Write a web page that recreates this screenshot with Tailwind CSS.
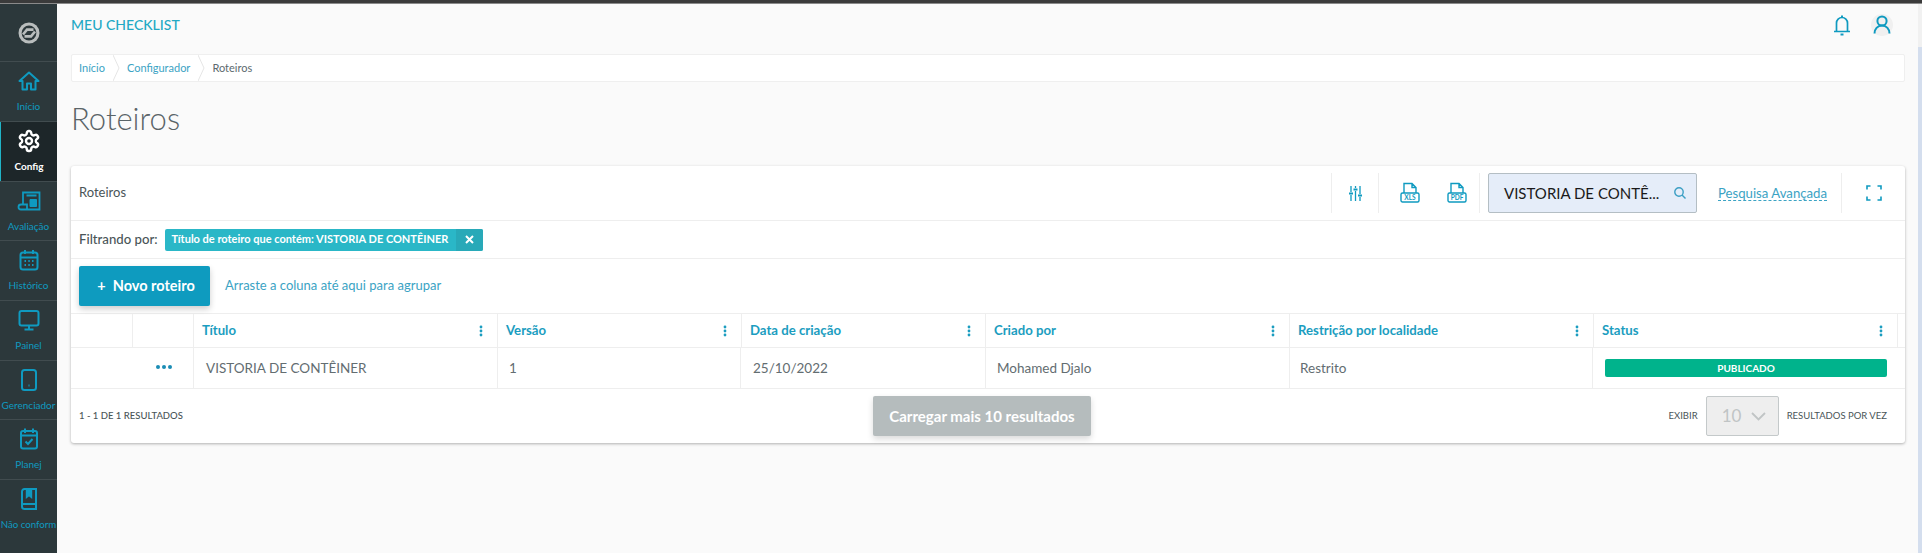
<!DOCTYPE html>
<html lang="pt">
<head>
  <meta charset="UTF-8" />
  <title>Meu Checklist - Roteiros</title>
  <script src="https://cdn.jsdelivr.net/npm/@tailwindcss/browser@4"></script>
</head>
<body class="bg-[#fafafa] font-['Lato','Liberation_Sans',sans-serif] overflow-hidden">
  <div class="h-[553px] flex flex-col">
    <!-- top strip -->
    <div class="h-[4px] shrink-0 bg-[#3b3b3b] border-b border-[#8a8a8a]"></div>

    <div class="flex flex-1 min-h-0">
      <!-- Sidebar -->
      <nav class="w-[57px] shrink-0 bg-[#2c383b] flex flex-col text-[10px] text-[#0f9ac0] text-center">
        <div class="h-[58px] flex items-center justify-center border-b border-[#414c4f]">
          <svg width="22" height="22" viewBox="0 0 22 22" fill="none">
            <circle cx="11" cy="11" r="10.5" fill="#b9bdbd"/>
            <circle cx="11" cy="11" r="7.4" fill="#2c383b"/>
            <path d="M5 12.5 9 7.6H15.5M17 9.5 13 14.4H6.5" stroke="#b9bdbd" stroke-width="2.6"/>
          </svg>
        </div>
        <a class="h-[60px] flex flex-col items-center pt-[7px] border-b border-[#414c4f]">
          <svg width="24" height="24" viewBox="0 0 24 24" fill="none" stroke="#0f9ac0" stroke-width="2"><path d="M2.5 12 12 3.5 21.5 12H18.5V20.5H14V14.5H10V20.5H5.5V12Z" stroke-linejoin="round"/></svg>
          <span class="mt-[6px]">Início</span>
        </a>
        <a class="h-[59px] flex flex-col items-center pt-[7px] bg-[#1d2629] border-l border-[#20b3c6] text-white font-bold">
          <svg width="24" height="24" viewBox="0 0 24 24" fill="none" stroke="#fff" stroke-width="2.4"><path d="M12.22 2h-.44a2 2 0 0 0-2 2v.18a2 2 0 0 1-1 1.73l-.43.25a2 2 0 0 1-2 0l-.15-.08a2 2 0 0 0-2.73.73l-.22.38a2 2 0 0 0 .73 2.73l.15.1a2 2 0 0 1 1 1.72v.51a2 2 0 0 1-1 1.74l-.15.09a2 2 0 0 0-.73 2.73l.22.38a2 2 0 0 0 2.73.73l.15-.08a2 2 0 0 1 2 0l.43.25a2 2 0 0 1 1 1.73V20a2 2 0 0 0 2 2h.44a2 2 0 0 0 2-2v-.18a2 2 0 0 1 1-1.73l.43-.25a2 2 0 0 1 2 0l.15.08a2 2 0 0 0 2.73-.73l.22-.39a2 2 0 0 0-.73-2.73l-.15-.08a2 2 0 0 1-1-1.74v-.5a2 2 0 0 1 1-1.74l.15-.09a2 2 0 0 0 .73-2.73l-.22-.38a2 2 0 0 0-2.73-.73l-.15.08a2 2 0 0 1-2 0l-.43-.25a2 2 0 0 1-1-1.73V4a2 2 0 0 0-2-2z"/><circle cx="12" cy="12" r="3"/></svg>
          <span class="mt-[6px]">Config</span>
        </a>
        <a class="h-[60px] flex flex-col items-center pt-[7px] border-b border-t border-[#414c4f]">
          <svg width="24" height="24" viewBox="0 0 24 24" fill="none" stroke="#0f9ac0" stroke-width="1.8"><path d="M6 15V3.5H22.5V20.5H4"/><path d="M4 20.5A2.5 2.5 0 0 1 4 15.5H10V20.5"/><path d="M9.5 6.5H19.5" stroke-width="2"/><path d="M13 10.5H19.5V17.5H13ZM16.2 10.5V17.5M13 14H19.5" fill="#0f9ac0" stroke-width="1"/></svg>
          <span class="mt-[6px]">Avaliação</span>
        </a>
        <a class="h-[60px] flex flex-col items-center pt-[7px] border-b border-[#414c4f]">
          <svg width="24" height="24" viewBox="0 0 24 24" fill="none" stroke="#0f9ac0" stroke-width="2"><rect x="3.5" y="4.5" width="17" height="17" rx="2.5"/><path d="M8 2V6M16 2V6M3.5 9.5H20.5"/><path d="M7.5 13H9M11.3 13H12.8M15 13H16.5M7.5 17H9M11.3 17H12.8M15 17H16.5" stroke-width="1.8"/></svg>
          <span class="mt-[6px]">Histórico</span>
        </a>
        <a class="h-[60px] flex flex-col items-center pt-[7px] border-b border-[#414c4f]">
          <svg width="24" height="24" viewBox="0 0 24 24" fill="none" stroke="#0f9ac0" stroke-width="2"><rect x="2.5" y="3" width="19" height="14.5" rx="2"/><path d="M12 17.5V21M7.5 21.5H16.5"/></svg>
          <span class="mt-[6px]">Painel</span>
        </a>
        <a class="h-[59px] flex flex-col items-center pt-[7px] border-b border-[#414c4f]">
          <svg width="24" height="24" viewBox="0 0 24 24" fill="none" stroke="#0f9ac0" stroke-width="2"><rect x="5" y="2" width="14" height="20" rx="2.5"/><path d="M11.5 17.5H12.5"/></svg>
          <span class="mt-[6px]">Gerenciador</span>
        </a>
        <a class="h-[60px] flex flex-col items-center pt-[7px] border-b border-[#414c4f]">
          <svg width="24" height="24" viewBox="0 0 24 24" fill="none" stroke="#0f9ac0" stroke-width="2"><rect x="4" y="4" width="16" height="17.5" rx="2"/><path d="M8 1.5V6M16 1.5V6M4 8.5H20"/><path d="M8.5 14.5 11 17 15.5 12"/></svg>
          <span class="mt-[6px]">Planej</span>
        </a>
        <a class="flex flex-col items-center pt-[7px]">
          <svg width="24" height="24" viewBox="0 0 24 24" fill="none" stroke="#0f9ac0" stroke-width="2"><path d="M5 18V4.5A2.5 2.5 0 0 1 7.5 2H19V22H7.5A2.5 2.5 0 0 1 5 19.5V18A1.5 1.5 0 0 1 6.5 17H19"/><path d="M9.5 2.5V10.5L12 8.5 14.5 10.5V2.5" fill="#0f9ac0" stroke-width="1.4"/></svg>
          <span class="mt-[6px] whitespace-nowrap text-[9.7px]">Não conform</span>
        </a>
      </nav>

      <!-- Main -->
      <main class="flex-1 min-w-0 pl-[14px] pr-[13px] flex flex-col">
        <header class="h-[50px] shrink-0 flex items-center justify-between">
          <span class="text-[14px] text-[#24a9c4] font-medium -mt-[9px]">MEU CHECKLIST</span>
          <div class="flex items-center gap-[18px] -mt-[8px] pr-[12px]">
            <svg width="22" height="24" viewBox="0 0 22 24" fill="none" stroke="#0f9ac0" stroke-width="1.7"><path d="M5.5 18.5V10A5.5 5.5 0 0 1 16.5 10V18.5M3 18.5H19"/><path d="M11 2.5V4.5" stroke-width="2"/><path d="M9.5 21.5H12.5" stroke-width="2"/></svg>
            <div class="w-[22px] h-[22px] rounded-full bg-[#f0f0f0] flex items-center justify-center">
              <svg width="22" height="22" viewBox="0 0 22 22" fill="none" stroke="#0f9ac0" stroke-width="2"><circle cx="11" cy="7" r="4.6"/><path d="M3.5 19.5C3.5 15 6.5 11.6 11 11.6S18.5 15 18.5 19.5"/></svg>
            </div>
          </div>
        </header>

        <!-- Breadcrumb -->
        <div class="h-[28px] shrink-0 bg-white border border-[#efefef] rounded-[2px] flex items-center text-[11px] text-[#3ba3c4]">
          <span class="pl-[7px] pr-[8px]">Início</span>
          <svg width="7" height="26" viewBox="0 0 7 26" fill="none" stroke="#e6e6e6"><path d="M0 0 6 13 0 26"/></svg>
          <span class="pl-[7px] pr-[8px]">Configurador</span>
          <svg width="7" height="26" viewBox="0 0 7 26" fill="none" stroke="#e6e6e6"><path d="M0 0 6 13 0 26"/></svg>
          <span class="pl-[7px] text-[#5c6a6e]">Roteiros</span>
        </div>

        <h1 class="h-[84px] shrink-0 flex items-center pb-[12px] text-[31px] font-light text-[#5a6468]">Roteiros</h1>

        <!-- Card -->
        <section class="w-[1834px] h-[277px] shrink-0 bg-white rounded-[3px] shadow-[0_1px_3px_rgba(0,0,0,0.3)] flex flex-col">
          <div class="h-[55px] shrink-0 flex items-center border-b border-[#eeeeee]">
            <span class="pl-[8px] text-[13px] text-[#4a5558] flex-1">Roteiros</span>
            <div class="w-[48px] h-[40px] flex items-center justify-center border-x border-[#eeeeee]">
              <svg width="13" height="15" viewBox="0 0 13 15" fill="none" stroke="#0f9ac0" stroke-width="1.3"><path d="M2 0V6M2 9V15M6.5 0V2M6.5 5V15M11 0V8M11 11V15"/><path d="M0 7.5H4M4.5 3.5H8.5M9 9.5H13" stroke-width="2.2"/></svg>
            </div>
            <div class="w-[101px] h-[40px] flex items-center gap-[27px] pl-[21px] border-r border-[#eeeeee]">
              <svg width="20" height="22" viewBox="0 0 20 22" fill="none" stroke="#0f9ac0" stroke-width="1.4"><path d="M4 11V1.5H12L16 5.5V11M12 1.5V5.5H16"/><rect x="1" y="11" width="18" height="9" rx="1.5"/><text x="10" y="18" text-anchor="middle" font-size="6.5" font-weight="700" fill="#0f9ac0" stroke="none">XLS</text></svg>
              <svg width="20" height="22" viewBox="0 0 20 22" fill="none" stroke="#0f9ac0" stroke-width="1.4"><path d="M4 11V1.5H12L16 5.5V11M12 1.5V5.5H16"/><rect x="1" y="11" width="18" height="9" rx="1.5"/><text x="10" y="18" text-anchor="middle" font-size="6.5" font-weight="700" fill="#0f9ac0" stroke="none">PDF</text></svg>
            </div>
            <div class="ml-[8px] w-[209px] h-[40px] bg-[#e5edf9] border border-[#b4bec4] rounded-[2px] flex items-center justify-between pl-[15px] pr-[9px]">
              <span class="text-[15px] text-[#1a1a1a]">VISTORIA DE CONTÊ...</span>
              <svg width="14" height="14" viewBox="0 0 14 14" fill="none" stroke="#3c9fc4" stroke-width="1.4"><circle cx="6" cy="6" r="4.2"/><path d="M9 9 12.5 12.5"/></svg>
            </div>
            <div class="w-[145px] h-[40px] flex items-center justify-center border-r border-[#eeeeee] pl-[7px]">
              <span class="text-[13.2px] text-[#3ba3c4] border-b border-dashed border-[#3ba3c4] leading-[14px]">Pesquisa Avançada</span>
            </div>
            <div class="w-[63px] flex items-center justify-center">
              <svg width="16" height="16" viewBox="0 0 16 16" fill="none" stroke="#0f9ac0" stroke-width="1.6"><path d="M1 4.5V1H4.5M11.5 1H15V4.5M15 11.5V15H11.5M4.5 15H1V11.5"/></svg>
            </div>
          </div>

          <!-- Filter chip -->
          <div class="h-[38px] shrink-0 flex items-center pl-[8px] border-b border-[#eeeeee] gap-[7px]">
            <span class="text-[13.2px] font-medium text-[#4a5558]">Filtrando por:</span>
            <div class="h-[22px] w-[318px] bg-[#2ab7c7] rounded-[2px] flex items-center text-white text-[11px] font-bold">
              <span class="flex-1 pl-[7px] whitespace-nowrap">Título de roteiro que contém: VISTORIA DE CONTÊINER</span>
              <span class="w-[27px] h-full bg-[#28a9b8] rounded-r-[2px] flex items-center justify-center">
                <svg width="9" height="9" viewBox="0 0 9 9" stroke="#fff" stroke-width="2"><path d="M1 1 8 8M8 1 1 8"/></svg>
              </span>
            </div>
          </div>

          <!-- Grouping row -->
          <div class="h-[55px] shrink-0 flex items-center pl-[8px] gap-[15px] border-b border-[#eeeeee]">
            <button class="w-[131px] h-[40px] pl-[3px] bg-[#0e9bbf] rounded-[2px] text-white text-[14.5px] font-bold shadow-[0_3px_6px_rgba(0,0,0,0.2)]">+&nbsp; Novo roteiro</button>
            <span class="text-[13px] text-[#3ba3c4]">Arraste a coluna até aqui para agrupar</span>
          </div>

          <!-- Table head -->
          <div class="h-[34px] shrink-0 grid grid-cols-[62px_61px_304px_244px_244px_304px_304px_304px_7px] border-b border-[#eeeeee] text-[13.2px] font-bold text-[#1b9dc0]">
            <div class="border-r border-[#eeeeee]"></div>
            <div class="border-r border-[#eeeeee]"></div>
            <div class="border-r border-[#eeeeee] flex items-center justify-between pl-[8px] pr-[14px]">Título<svg width="4" height="12" fill="#1b9dc0"><circle cx="2" cy="2" r="1.4"/><circle cx="2" cy="6" r="1.4"/><circle cx="2" cy="10" r="1.4"/></svg></div>
            <div class="border-r border-[#eeeeee] flex items-center justify-between pl-[8px] pr-[14px]">Versão<svg width="4" height="12" fill="#1b9dc0"><circle cx="2" cy="2" r="1.4"/><circle cx="2" cy="6" r="1.4"/><circle cx="2" cy="10" r="1.4"/></svg></div>
            <div class="border-r border-[#eeeeee] flex items-center justify-between pl-[8px] pr-[14px]">Data de criação<svg width="4" height="12" fill="#1b9dc0"><circle cx="2" cy="2" r="1.4"/><circle cx="2" cy="6" r="1.4"/><circle cx="2" cy="10" r="1.4"/></svg></div>
            <div class="border-r border-[#eeeeee] flex items-center justify-between pl-[8px] pr-[14px]">Criado por<svg width="4" height="12" fill="#1b9dc0"><circle cx="2" cy="2" r="1.4"/><circle cx="2" cy="6" r="1.4"/><circle cx="2" cy="10" r="1.4"/></svg></div>
            <div class="border-r border-[#eeeeee] flex items-center justify-between pl-[8px] pr-[14px]">Restrição por localidade<svg width="4" height="12" fill="#1b9dc0"><circle cx="2" cy="2" r="1.4"/><circle cx="2" cy="6" r="1.4"/><circle cx="2" cy="10" r="1.4"/></svg></div>
            <div class="border-r border-[#eeeeee] flex items-center justify-between pl-[8px] pr-[14px]">Status<svg width="4" height="12" fill="#1b9dc0"><circle cx="2" cy="2" r="1.4"/><circle cx="2" cy="6" r="1.4"/><circle cx="2" cy="10" r="1.4"/></svg></div>
            <div></div>
          </div>

          <!-- Table row -->
          <div class="h-[41px] shrink-0 grid grid-cols-[123px_304px_243px_245px_304px_303px_1fr] border-b border-[#eeeeee] text-[13.5px] font-normal text-[#636d71]">
            <div class="border-r border-[#eeeeee] flex items-center justify-end pr-[21px] pb-[3px]">
              <svg width="16" height="4" fill="#1b8db5"><circle cx="2" cy="2" r="2"/><circle cx="8" cy="2" r="2"/><circle cx="14" cy="2" r="2"/></svg>
            </div>
            <div class="border-r border-[#eeeeee] flex items-center pl-[12px]">VISTORIA DE CONTÊINER</div>
            <div class="border-r border-[#eeeeee] flex items-center pl-[11px]">1</div>
            <div class="border-r border-[#eeeeee] flex items-center pl-[12px]">25/10/2022</div>
            <div class="border-r border-[#eeeeee] flex items-center pl-[11px]">Mohamed Djalo</div>
            <div class="border-r border-[#eeeeee] flex items-center pl-[10px]">Restrito</div>
            <div class="flex items-center pl-[12px]">
              <span class="w-[282px] h-[18px] rounded-[2px] bg-[#00b38c] text-white text-[10px] font-bold flex items-center justify-center">PUBLICADO</span>
            </div>
          </div>

          <!-- Footer -->
          <div class="flex-1 grid grid-cols-[794px_218px_1fr] items-center px-[8px] text-[9.5px] text-[#4a5558]">
            <span class="font-medium">1 - 1 DE 1 RESULTADOS</span>
            <button class="h-[40px] bg-[#b5bcbd] rounded-[2px] text-white text-[15px] font-bold shadow-[0_3px_6px_rgba(0,0,0,0.15)]">Carregar mais 10 resultados</button>
            <div class="flex items-center justify-end gap-[8px] pr-[10px]">
              <span>EXIBIR</span>
              <div class="w-[73px] h-[40px] bg-[#eeeeee] border border-[#c4c9ca] rounded-[2px] flex items-center justify-between pl-[15px] pr-[12px] text-[17px] text-[#c0c4c5]">
                10
                <svg width="15" height="9" viewBox="0 0 15 9" fill="none" stroke="#c0c4c5" stroke-width="1.8"><path d="M1 1 7.5 7.5 14 1"/></svg>
              </div>
              <span>RESULTADOS POR VEZ</span>
            </div>
          </div>
        </section>
      </main>

      <!-- Page scrollbar -->
      <div class="w-[4px] shrink-0 flex flex-col">
        <div class="h-[43px] bg-[#f1f1f1]"></div>
        <div class="flex-1 bg-[#d4deee]"></div>
      </div>
    </div>
  </div>
</body>
</html>
